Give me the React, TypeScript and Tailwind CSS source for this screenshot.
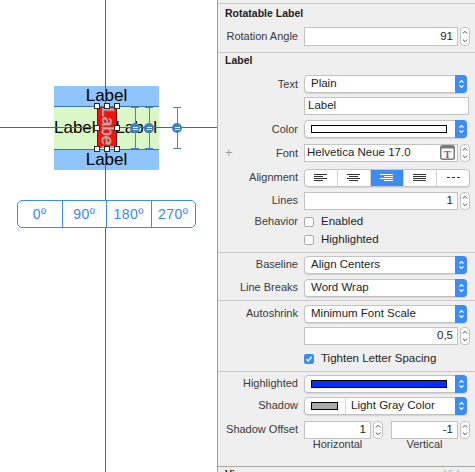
import React from "react";

const FONT = { fontFamily: '"Liberation Sans", Arial, sans-serif' };

function PopChevrons() {
  return (
    <svg width="7" height="12" viewBox="0 0 7 12">
      <path d="M1.5 4.6 L3.5 2.6 L5.5 4.6" fill="none" stroke="white" strokeWidth="1.2" />
      <path d="M1.5 7.4 L3.5 9.4 L5.5 7.4" fill="none" stroke="white" strokeWidth="1.2" />
    </svg>
  );
}

function Popup({ children, h = 18 }: { children: React.ReactNode; h?: number }) {
  return (
    <div
      className="flex w-[163px] items-stretch rounded-[4px] border border-[#c3c3c3] bg-white shadow-[0_1px_1px_rgba(0,0,0,0.12)]"
      style={{ height: h }}
    >
      <div className="flex min-w-0 flex-1 items-center text-[11.5px] text-[#1e1e1e]">{children}</div>
      <div className="-my-px -mr-px flex w-[12px] items-center justify-center rounded-r-[4px] bg-[#3b8cf5]">
        <PopChevrons />
      </div>
    </div>
  );
}

function Stepper({ h = 18 }: { h?: number }) {
  return (
    <div
      className="ml-[2px] flex w-[10px] items-center justify-center rounded-[4px] border border-[#c3c3c3] bg-white"
      style={{ height: h }}
    >
      <svg width="8" height={h - 2} viewBox={`0 0 8 ${h - 2}`}>
        <path d="M1.8 5.5 L4 3.3 L6.2 5.5" fill="none" stroke="#4a4a4a" strokeWidth="1" />
        <path d={`M1.8 ${h - 7.5} L4 ${h - 5.3} L6.2 ${h - 7.5}`} fill="none" stroke="#4a4a4a" strokeWidth="1" />
      </svg>
    </div>
  );
}

function Field({
  children,
  w = 154,
  h = 18,
  right = false,
}: {
  children?: React.ReactNode;
  w?: number;
  h?: number;
  right?: boolean;
}) {
  return (
    <div
      className={`flex items-center border border-[#c3c3c3] bg-white px-[3px] text-[11.5px] text-[#1e1e1e] ${
        right ? "justify-end pr-[4px]" : ""
      }`}
      style={{ width: w, height: h }}
    >
      {children}
    </div>
  );
}

function Row({
  label,
  children,
  className = "",
  left,
}: {
  label?: string;
  children: React.ReactNode;
  className?: string;
  left?: React.ReactNode;
}) {
  return (
    <div className={`flex items-center ${className}`}>
      <div className="flex w-[80px] items-center justify-between text-[11px] text-[#3a3a3a]">
        <span className="pl-[7px]">{left}</span>
        <span>{label}</span>
      </div>
      <div className="ml-[6px] flex items-center">{children}</div>
    </div>
  );
}

function Check({ checked = false, label }: { checked?: boolean; label: string }) {
  return (
    <div className="flex items-center">
      {checked ? (
        <div className="flex h-[10px] w-[10px] items-center justify-center rounded-[2px] bg-[#3b8cf5]">
          <svg width="8" height="8" viewBox="0 0 8 8">
            <path d="M1.5 4.2 L3.2 6 L6.6 1.8" fill="none" stroke="white" strokeWidth="1.4" />
          </svg>
        </div>
      ) : (
        <div className="h-[10px] w-[10px] rounded-[2px] border border-[#a9a9a9] bg-white" />
      )}
      <span className="ml-[7px] text-[11.5px] text-[#1e1e1e]">{label}</span>
    </div>
  );
}

function AlignIcon({ kind, on }: { kind: "l" | "c" | "r" | "j" | "n"; on?: boolean }) {
  const c = on ? "white" : "#333333";
  const full = 13;
  const short = 9;
  const ys = [0, 2, 4, 6];
  if (kind === "n") {
    return (
      <svg width="14" height="7" viewBox="0 0 14 7" shapeRendering="crispEdges">
        <rect x="1" y="3" width="3" height="1" fill={c} />
        <rect x="6" y="3" width="3" height="1" fill={c} />
        <rect x="11" y="3" width="3" height="1" fill={c} />
      </svg>
    );
  }
  return (
    <svg width="14" height="7" viewBox="0 0 14 7" shapeRendering="crispEdges">
      {ys.map((y, i) => {
        const w = kind === "j" ? full : i % 2 === 0 ? full : short;
        let x = 0;
        if (kind === "c") x = (full - w) / 2;
        if (kind === "r") x = full - w;
        return <rect key={i} x={x} y={y} width={w} height="1" fill={c} />;
      })}
    </svg>
  );
}

function Sep({ className = "", dark = false }: { className?: string; dark?: boolean }) {
  return <div className={`h-px w-full ${dark ? "bg-[#a9a9a9]" : "bg-[#c9c9c9]"} ${className}`} />;
}

function Well({ w, color }: { w: number; color: string }) {
  return <div className="h-[8px] border border-black" style={{ width: w, backgroundColor: color }} />;
}

function Handle({ x, y }: { x: number; y: number }) {
  return (
    <div
      className="absolute h-[6px] w-[6px] border border-[#2a2a2a] bg-white"
      style={{ left: x, top: y }}
    />
  );
}

function EqCircle({ x }: { x: number }) {
  return (
    <div
      className="absolute flex h-[10px] w-[10px] flex-col items-center justify-center gap-[1px] rounded-full bg-[#3f80d0]"
      style={{ left: x - 5, top: 123 }}
    >
      <div className="h-px w-[5px] bg-white" />
      <div className="h-px w-[5px] bg-white" />
    </div>
  );
}

function IBeam({ x }: { x: number }) {
  return (
    <>
      <div className="absolute w-px bg-[#4a7fc3]" style={{ left: x, top: 107, height: 42 }} />
      <div className="absolute h-px w-[8px] bg-[#4a7fc3]" style={{ left: x - 4, top: 107 }} />
      <div className="absolute h-px w-[8px] bg-[#4a7fc3]" style={{ left: x - 4, top: 148 }} />
    </>
  );
}

function Canvas() {
  return (
    <div className="relative h-[472px] w-[218px] shrink-0 overflow-hidden border-r border-[#a3a3a3] bg-white">
      {/* label stack */}
      <div className="absolute left-[54px] top-[86px] flex h-[84px] w-[105px] flex-col bg-[#90c4fc] text-[17px] leading-[20px] text-black">
        <div className="flex h-[20px] items-center justify-center">Label</div>
        <div className="flex h-[44px] items-center justify-between border-y border-[#3d72b8] bg-[#daf7c8] pr-[2px]">
          <span>Label</span>
          <span>Label</span>
        </div>
        <div className="flex flex-1 items-center justify-center">Label</div>
      </div>

      {/* crosshair */}
      <div className="absolute left-0 top-[127px] h-px w-full bg-[#2f6db3]" />
      <div className="absolute left-[105px] top-0 h-full w-px bg-[#2f6db3]" />

      {/* constraints */}
      <IBeam x={135} />
      <IBeam x={149} />
      <IBeam x={177} />
      <EqCircle x={113} />
      <EqCircle x={135} />
      <EqCircle x={149} />
      <EqCircle x={177} />

      {/* rotated red label */}
      <div className="absolute left-[97px] top-[107px] h-[41px] w-[20px] overflow-hidden border-x border-[#6a1515] bg-[#ff0d0d]">
        <div className="absolute left-1/2 top-1/2 -translate-x-1/2 -translate-y-1/2 rotate-[91deg] text-[17px] leading-[20px] text-[#c9b0b0] [text-shadow:1px_-1px_0_rgba(140,140,140,0.9)]">
          Label
        </div>
      </div>

      <Handle x={94} y={103} />
      <Handle x={104} y={103} />
      <Handle x={114} y={103} />
      <Handle x={94} y={125} />
      <Handle x={114} y={125} />
      <Handle x={94} y={146} />
      <Handle x={104} y={146} />
      <Handle x={114} y={146} />

      {/* rotation segmented control */}
      <div className="absolute left-[17px] top-[200px] flex h-[28px] w-[179px] overflow-hidden rounded-[5px] border border-[#3d8bf2] bg-white text-[14px] tracking-[0.5px] text-[#3a86ee]">
        {["0º", "90º", "180º", "270º"].map((t, i) => (
          <div
            key={t}
            className={`flex flex-1 items-center justify-center ${i > 0 ? "border-l border-[#3d8bf2]" : ""}`}
          >
            {t}
          </div>
        ))}
      </div>
    </div>
  );
}

function FontIcon() {
  return (
    <svg width="15" height="15" viewBox="0 0 15 15">
      <rect x="0.75" y="0.75" width="13.5" height="13.5" rx="2" fill="white" stroke="#7b7b7b" strokeWidth="1.5" />
      <rect x="1" y="1" width="13" height="2.5" fill="#7b7b7b" />
      <text
        x="7.5"
        y="13"
        textAnchor="middle"
        fontFamily='"Liberation Serif", serif'
        fontWeight="bold"
        fontSize="11"
        fill="#6b6b6b"
      >
        T
      </text>
    </svg>
  );
}

function Panel() {
  return (
    <div className="h-[472px] w-[257px] shrink-0 overflow-hidden bg-[#efefef]" style={FONT}>
      <div className="h-[3px]" />
      <Sep />
      <div className="flex h-[20px] items-center pl-[7px] text-[10.5px] font-bold text-[#222]">Rotatable Label</div>
      <Row label="Rotation Angle" className="mt-[3px]">
        <Field h={19} right>
          91
        </Field>
        <Stepper h={19} />
      </Row>
      <Sep className="mt-[6px]" />

      <div className="flex h-[16px] items-center pl-[7px] text-[10.5px] font-bold text-[#222]">Label</div>
      <Row label="Text" className="mt-[6px]">
        <Popup>
          <span className="pl-[6px]">Plain</span>
        </Popup>
      </Row>
      <Row className="mt-[4px]">
        <Field w={165}>Label</Field>
      </Row>
      <Row label="Color" className="mt-[5px]">
        <Popup>
          <div className="pl-[6px]">
            <Well w={136} color="#ffffff" />
          </div>
        </Popup>
      </Row>
      <Row label="Font" left={<span className="text-[13px] text-[#a0a0a0]">+</span>} className="mt-[5px]">
        <div className="flex h-[18px] w-[154px] items-center justify-between border border-[#c3c3c3] bg-white pl-[2px] pr-[2px] text-[11.5px] text-[#1e1e1e]">
          <span>Helvetica Neue 17.0</span>
          <FontIcon />
        </div>
        <Stepper />
      </Row>
      <Row label="Alignment" className="mt-[6px]">
        <div className="flex h-[18px] w-[166px] overflow-hidden rounded-[4px] border border-[#c3c3c3] bg-white shadow-[0_1px_1px_rgba(0,0,0,0.1)]">
          {(["l", "c", "r", "j", "n"] as const).map((k, i) => (
            <div
              key={k}
              className={`flex flex-1 items-center justify-center ${i > 0 ? "border-l border-[#d0d0d0]" : ""} ${
                k === "r" ? "bg-[#3b8cf5]" : ""
              }`}
            >
              <AlignIcon kind={k} on={k === "r"} />
            </div>
          ))}
        </div>
      </Row>
      <Row label="Lines" className="mt-[5px]">
        <Field right>1</Field>
        <Stepper />
      </Row>
      <Row label="Behavior" className="mt-[6px] h-[12px]">
        <Check label="Enabled" />
      </Row>
      <Row className="mt-[6px] h-[12px]">
        <Check label="Highlighted" />
      </Row>
      <Sep className="mt-[6px]" />

      <Row label="Baseline" className="mt-[3px]">
        <Popup>
          <span className="pl-[6px]">Align Centers</span>
        </Popup>
      </Row>
      <Row label="Line Breaks" className="mt-[5px]">
        <Popup>
          <span className="pl-[6px]">Word Wrap</span>
        </Popup>
      </Row>
      <Sep className="mt-[3px]" />

      <Row label="Autoshrink" className="mt-[4px]">
        <Popup>
          <span className="pl-[6px]">Minimum Font Scale</span>
        </Popup>
      </Row>
      <Row className="mt-[4px]">
        <Field right>0,5</Field>
        <Stepper />
      </Row>
      <Row className="mt-[8px] h-[12px]">
        <Check checked label="Tighten Letter Spacing" />
      </Row>
      <Sep className="mt-[6px]" />

      <Row label="Highlighted" className="mt-[3px]">
        <Popup>
          <div className="pl-[6px]">
            <Well w={136} color="#0a2dff" />
          </div>
        </Popup>
      </Row>
      <Row label="Shadow" className="mt-[4px]">
        <Popup>
          <div className="flex h-full items-center pl-[6px]">
            <Well w={27} color="#aaaaaa" />
            <div className="ml-[7px] h-full w-px bg-[#d6d6d6]" />
            <span className="ml-[5px]">Light Gray Color</span>
          </div>
        </Popup>
      </Row>
      <Row label="Shadow Offset" className="mt-[6px]">
        <Field w={67} right>
          1
        </Field>
        <Stepper />
        <div className="ml-[8px] flex items-center">
          <Field w={67} right>
            -1
          </Field>
          <Stepper />
        </div>
      </Row>
      <Row className="h-[11px]">
        <div className="flex text-[11px] leading-[11px] text-[#3a3a3a]">
          <span className="w-[67px] text-center">Horizontal</span>
          <span className="ml-[20px] w-[67px] text-center">Vertical</span>
        </div>
      </Row>
      <Sep dark className="mt-[16px]" />
      <div className="flex h-[12px] items-start justify-between pl-[7px] pr-[10px] pt-[1px] text-[10.5px] leading-[12px]">
        <span className="font-bold text-[#222]">View</span>
        <span className="text-[#a5a5a5]">Hide</span>
      </div>
    </div>
  );
}

export default function App() {
  return (
    <div className="flex h-[472px] w-[475px] overflow-hidden" style={FONT}>
      <Canvas />
      <Panel />
    </div>
  );
}
